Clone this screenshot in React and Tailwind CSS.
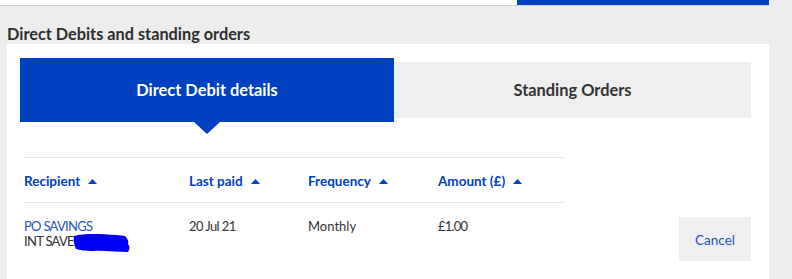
import React from 'react';

const font = { fontFamily: '"Lato", "Open Sans", "Liberation Sans", sans-serif' };

function SortUp() {
  return (
    <svg width="9" height="5" viewBox="0 0 9 5" className="ml-[8px] inline-block">
      <path d="M0 5 L4.5 0 L9 5 Z" fill="#0041c0" />
    </svg>
  );
}

function HeaderCell({ label, width }) {
  return (
    <div className={`${width} flex items-center text-[13.5px] font-bold text-[#0041c0]`}>
      {label}
      <SortUp />
    </div>
  );
}

export default function App() {
  return (
    <div className="w-[792px] h-[279px] overflow-hidden bg-[#ededed] text-[#333]" style={font}>
      {/* top strip */}
      <div className="flex">
        <div className="w-[517px] h-[6px] bg-white border-b border-[#d2d2d2]" />
        <div className="w-[252px] h-[6px] bg-[#0041c0] border-b border-[#c9cfe0]" />
      </div>

      <h2 className="ml-[7px] mt-[18px] text-[16.3px] font-bold leading-[20px] text-[#2e2e2e]">
        Direct Debits and standing orders
      </h2>

      <div className="ml-[7px] w-[762px] h-[240px] bg-white pl-[13px] pr-[18px] pt-[14px]">
        {/* tabs */}
        <div className="flex items-center">
          <div className="relative w-[374px] h-[64px] bg-[#0041c0] flex items-center justify-center text-white text-[16.4px] font-bold">
            Direct Debit details
            <svg width="26" height="12" viewBox="0 0 26 12" className="absolute top-full left-[174px]">
              <path d="M0 0 L13 12 L26 0 Z" fill="#0041c0" />
            </svg>
          </div>
          <div className="w-[357px] h-[56px] bg-[#efefef] flex items-center justify-center text-[16.4px] font-bold text-[#333]">
            Standing Orders
          </div>
        </div>

        {/* table */}
        <div className="flex mt-[35px]">
          <div className="ml-[4px] w-[541px]">
            <div className="flex h-[46px] border-t border-b border-[#e8e8e8] pt-[2px]">
              <HeaderCell label="Recipient" width="w-[165px]" />
              <HeaderCell label="Last paid" width="w-[119px]" />
              <HeaderCell label="Frequency" width="w-[130px]" />
              <HeaderCell label="Amount (£)" width="flex-1" />
            </div>
            <div className="flex pt-[16px] text-[13px] leading-[15px]">
              <div className="w-[165px]">
                <div className="text-[#1f55c6] tracking-[-0.7px]">PO SAVINGS</div>
                <div className="relative text-[#333] tracking-[-0.7px]">
                  INT SAVE
                  <svg width="58" height="20" viewBox="0 0 58 20" className="absolute left-[49px] top-[-1px]">
                    <path
                      d="M1 3 C12 0 28 1 44 2 L52 3 C55 6 56 9 55 11 C57 13 57 16 55 19 C44 19 30 17 20 18 C12 18 6 17 3 16 C1 12 0 7 1 3 Z"
                      fill="#0000f5"
                    />
                  </svg>
                </div>
              </div>
              <div className="w-[119px] tracking-[-0.6px]">20 Jul 21</div>
              <div className="w-[130px]">Monthly</div>
              <div className="flex-1 tracking-[-0.8px]">£1.00</div>
            </div>
          </div>
          <div className="flex-1 flex justify-end pt-[60px]">
            <button className="w-[72px] h-[44px] pt-[3px] bg-[#efefef] text-[13.5px] text-[#1f55c6]">Cancel</button>
          </div>
        </div>
      </div>
    </div>
  );
}
